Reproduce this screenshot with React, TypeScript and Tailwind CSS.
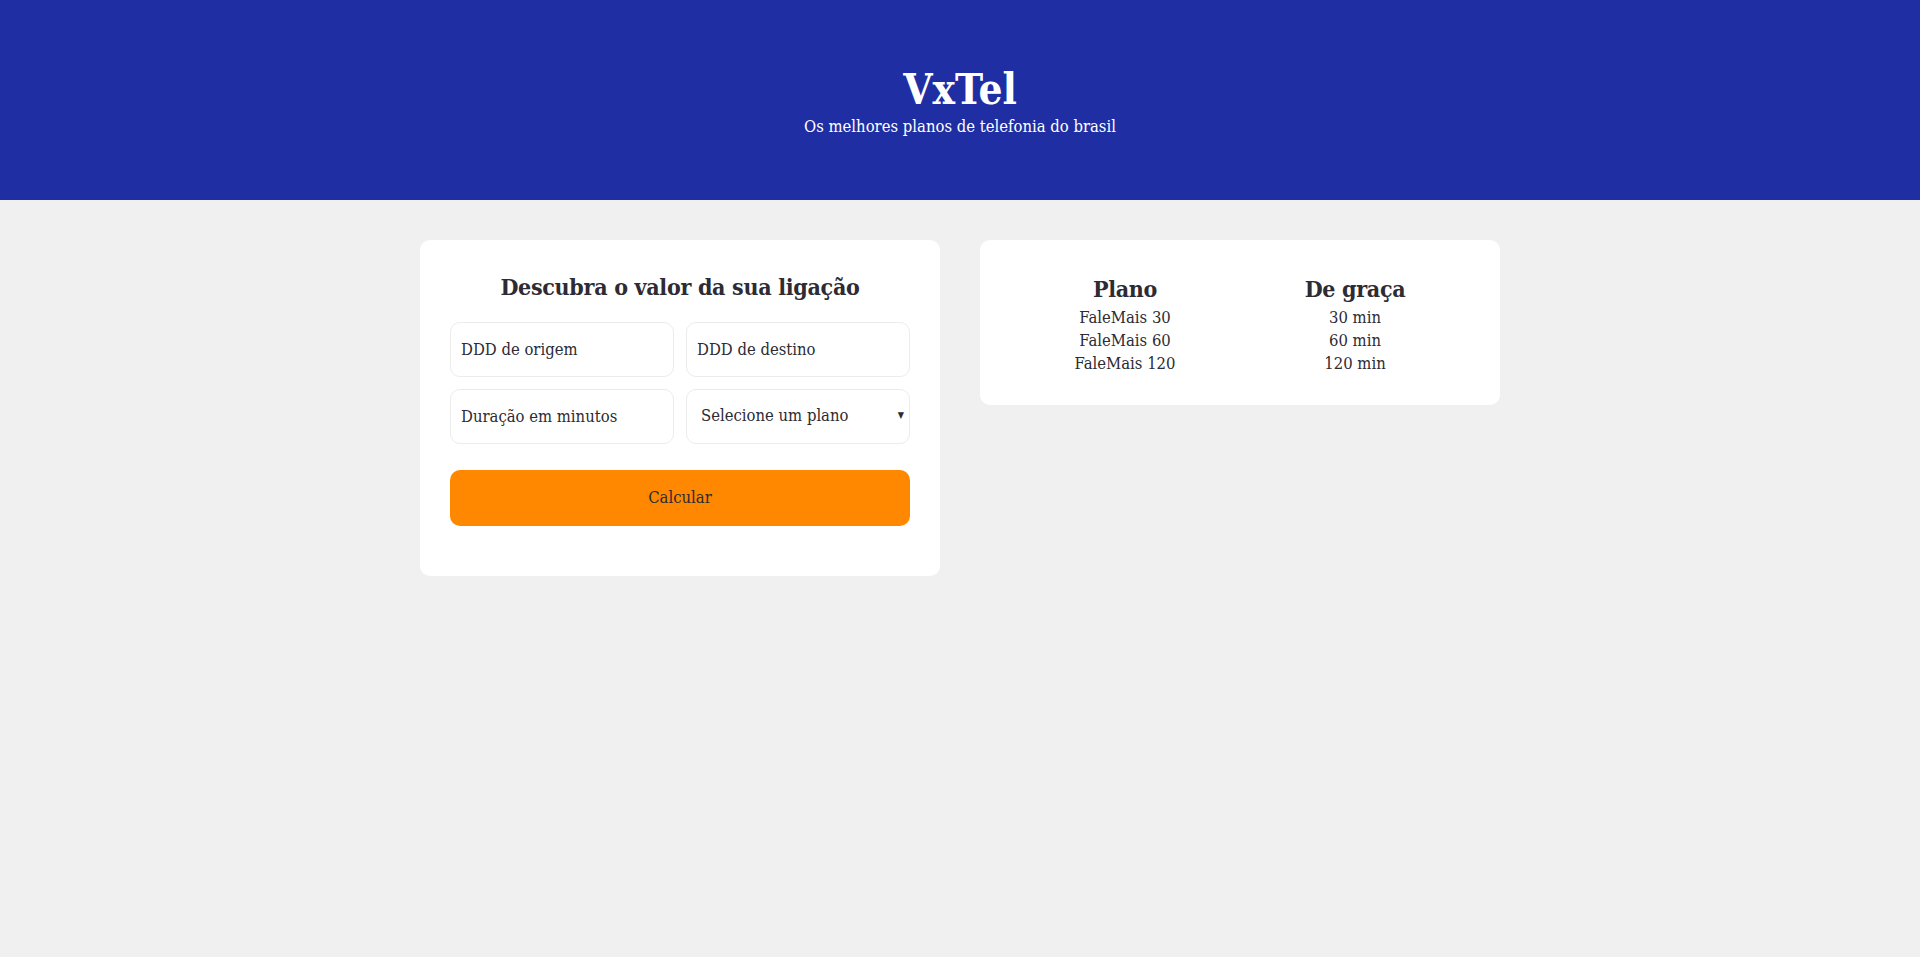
import { useState } from 'react';

const plans = [
  { name: 'FaleMais 30', free: '30 min' },
  { name: 'FaleMais 60', free: '60 min' },
  { name: 'FaleMais 120', free: '120 min' },
];

const fieldClass =
  'h-[55px] w-full rounded-[10px] border border-[#ececec] bg-white px-[10px] text-[16.5px] text-[#2d2b33] outline-none placeholder:text-[#2d2b33]';

export default function App() {
  const [origem, setOrigem] = useState('');
  const [destino, setDestino] = useState('');
  const [minutos, setMinutos] = useState('');
  const [plano, setPlano] = useState('');

  return (
    <div className="min-h-[957px] bg-[#f0f0f0] text-[#2d2b33] font-['DejaVu_Serif_Condensed','DejaVu_Serif',serif] font-stretch-condensed">
      {/* Header */}
      <header className="flex h-[200px] flex-col items-center bg-[#1f2ea3] pt-[68px] text-white">
        <h1 className="text-[42px] font-bold leading-[44px]">VxTel</h1>
        <p className="mt-[4px] text-[16.5px] leading-[22px]">Os melhores planos de telefonia do brasil</p>
      </header>

      <main className="flex items-start justify-center gap-10 pt-[40px]">
        {/* Calculator */}
        <section className="w-[520px] rounded-[10px] bg-white px-[30px] pb-[50px] pt-[33px]">
          <h2 className="text-center text-[23px] font-bold leading-[28px] tracking-[-0.3px]">
            Descubra o valor da sua ligação
          </h2>
          <form
            className="mt-[21px]"
            onSubmit={(e) => {
              e.preventDefault();
            }}
          >
            <div className="grid grid-cols-2 gap-3">
              <input
                className={fieldClass}
                placeholder="DDD de origem"
                value={origem}
                onChange={(e) => setOrigem(e.target.value)}
              />
              <input
                className={fieldClass}
                placeholder="DDD de destino"
                value={destino}
                onChange={(e) => setDestino(e.target.value)}
              />
              <input
                className={fieldClass}
                placeholder="Duração em minutos"
                value={minutos}
                onChange={(e) => setMinutos(e.target.value)}
              />
              <div className="relative">
                <select
                  className={fieldClass + ' appearance-none pl-[14px]'}
                  value={plano}
                  onChange={(e) => setPlano(e.target.value)}
                >
                  <option value="">Selecione um plano</option>
                  {plans.map((p) => (
                    <option key={p.name} value={p.name}>
                      {p.name}
                    </option>
                  ))}
                </select>
                <span className="pointer-events-none absolute inset-y-0 right-[6px] flex items-center pb-[2px] text-[9px]">
                  ▼
                </span>
              </div>
            </div>
            <button
              type="submit"
              className="mt-[26px] h-[56px] w-full rounded-[10px] bg-[#ff8800] text-[16.5px] text-[#2d2b33]"
            >
              Calcular
            </button>
          </form>
        </section>

        {/* Plans table */}
        <section className="w-[520px] rounded-[10px] bg-white px-[30px] pb-[30px] pt-[35px]">
          <div className="grid grid-cols-2 text-center">
            <div>
              <h3 className="text-[23px] font-bold leading-[28px] tracking-[-0.3px]">Plano</h3>
              <ul className="mt-[3px] text-[16.5px] leading-[23px]">
                {plans.map((p) => (
                  <li key={p.name}>{p.name}</li>
                ))}
              </ul>
            </div>
            <div>
              <h3 className="text-[23px] font-bold leading-[28px] tracking-[-0.3px]">De graça</h3>
              <ul className="mt-[3px] text-[16.5px] leading-[23px]">
                {plans.map((p) => (
                  <li key={p.name}>{p.free}</li>
                ))}
              </ul>
            </div>
          </div>
        </section>
      </main>
    </div>
  );
}
